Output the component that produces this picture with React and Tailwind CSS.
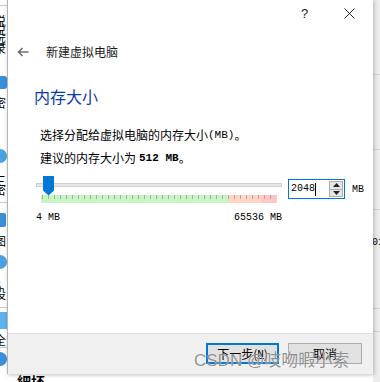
import React from "react";

function Ticks() {
  const ticks = Array.from({ length: 39 });
  return (
    <div className="absolute left-0 top-0 flex gap-[5px] pl-[1px]">
      {ticks.map((_, i) => (
        <div key={i} className="w-px h-[4px] bg-[#a8a8a8]" />
      ))}
    </div>
  );
}

function LeftStrip() {
  return (
    <div className="w-[7px] h-full bg-white flex flex-col overflow-hidden font-['Noto_Sans_CJK_SC',sans-serif] text-[12px] leading-[8px] text-black">
      <div className="h-[6px] border-b border-[#c8c8c8]" />
      <div className="mt-[11px] flex flex-col gap-[0px]">
        <span className="ml-[-6px]">说</span>
        <span className="ml-[-6px] mt-[1px]">说</span>
        <span className="ml-[-6px] mt-[1px]">远</span>
        <span className="ml-[-6px] mt-[1px]">录</span>
      </div>
      <div className="mt-[24px] ml-[-6px] w-[13px] h-[13px] rounded-[3px] bg-[#3a8fd8]" />
      <span className="mt-[10px] ml-[-6px]">密</span>
      <div className="mt-[42px] ml-[-7px] w-[14px] h-[14px] rounded-full bg-[#4aa3e0]" />
      <span className="mt-[14px] ml-[-6px]">三</span>
      <span className="mt-[1px] ml-[-6px]">密</span>
      <div className="mt-[8px] h-px bg-[#c8c8c8]" />
      <div className="mt-[10px] ml-[-6px] w-[12px] h-[14px] rounded-[2px] bg-[#3a8fd8]" />
      <span className="mt-[10px] ml-[-6px]">图</span>
      <div className="mt-[10px] ml-[-7px] w-[14px] h-[14px] rounded-full bg-[#4aa3e0]" />
      <span className="mt-[12px] ml-[-6px]">S</span>
      <span className="mt-[1px] ml-[-6px]">设</span>
      <div className="mt-[9px] h-px bg-[#c8c8c8]" />
      <div className="mt-[4px] h-[17px] bg-[#5cb3ee]" />
      <span className="mt-[7px] ml-[-6px]">全</span>
      <div className="mt-[3px] h-px bg-[#c8c8c8]" />
      <div className="mt-[4px] ml-[-7px] w-[14px] h-[14px] rounded-full bg-[#3a8fd8]" />
    </div>
  );
}

function RightStrip() {
  return (
    <div className="w-[7px] h-full bg-[#ececec] flex flex-col overflow-hidden">
      <div className="h-[75px] border-b border-[#d4d4d4]" />
      <div className="h-[75px] border-b border-[#d4d4d4]" />
      <div className="h-[60px] border-b border-[#d4d4d4]" />
      <div className="h-[27px]" />
      <div className="ml-[-1px] font-['Liberation_Mono',monospace] text-[10px] leading-[12px] text-black">01</div>
      <div className="h-[60px] border-b border-[#d4d4d4]" />
      <div className="h-[23px] border-b border-[#d4d4d4]" />
    </div>
  );
}

export default function App() {
  const cjk = "font-['Microsoft_YaHei','Noto_Sans_CJK_SC',sans-serif]";
  return (
    <div className="relative w-[380px] h-[382px] overflow-hidden bg-white">
      <div className="flex w-full h-full">
        <LeftStrip />
        <div className="flex-1 flex flex-col">
          <div className="flex-1" />
          <div className="h-[8px] pl-[10px] overflow-hidden">
            <span className="block mt-[0px] font-['Noto_Sans_CJK_SC',sans-serif] text-[14px] font-bold leading-[14px] text-black">細坯</span>
          </div>
        </div>
        <RightStrip />
      </div>

      <div className="absolute left-[7px] top-0 w-[366px] h-[374px] bg-white border-l border-[#b4b4b4] flex flex-col shadow-[1px_1px_4px_rgba(0,0,0,0.25)] font-['Noto_Sans_CJK_SC',sans-serif] text-black">
        {/* title bar */}
        <div className="h-[30px] flex justify-end pr-[1px]">
          <div className="w-[45px] h-full flex items-center justify-center font-['Liberation_Sans',sans-serif] text-[13px] text-[#222] pb-[3px]">?</div>
          <div className="w-[45px] h-full flex items-center justify-center pb-[3px]">
            <svg width="11" height="11" viewBox="0 0 11 11">
              <path d="M0.5 0.5 L10.5 10.5 M10.5 0.5 L0.5 10.5" stroke="#222" strokeWidth="1" fill="none" />
            </svg>
          </div>
        </div>

        {/* header */}
        <div className="mt-[10px] h-[24px] flex items-center">
          <svg className="ml-[9px]" width="12" height="10" viewBox="0 0 12 10">
            <path d="M11.5 5 H1.5 M5.5 1 L1.5 5 L5.5 9" stroke="#6d6d6d" strokeWidth="1.6" fill="none" />
          </svg>
          <span className={`ml-[17px] text-[12px] leading-[16px] text-[#1a1a1a] ${cjk}`}>新建虚拟电脑</span>
        </div>

        {/* heading */}
        <div className={`mt-[21px] ml-[26px] h-[22px] text-[16px] leading-[22px] text-[#0a3aa8] ${cjk}`}>内存大小</div>

        {/* paragraphs */}
        <div className="mt-[18px] ml-[32px] h-[20px] flex items-center text-[12px] leading-[20px]">
          <span>选择分配给虚拟电脑的内存大小</span>
          <span className="font-['Liberation_Mono',monospace] text-[11px]">(MB)</span>
          <span>。</span>
        </div>
        <div className="mt-[3px] ml-[32px] h-[20px] flex items-center text-[12px] leading-[20px]">
          <span>建议的内存大小为 </span>
          <span className="ml-[3px] font-['Liberation_Mono',monospace] font-bold text-[11px]">512 MB</span>
          <span>。</span>
        </div>

        {/* slider row */}
        <div className="mt-[8px] ml-[28px] h-[27px] flex items-start">
          <div className="relative w-[246px] h-[27px]">
            <div className="absolute left-0 top-[7px] w-[246px] h-[4px] bg-[#e6e6e6] border border-[#d0d0d0]" />
            <div className="absolute left-[5px] top-[19px] w-[236px] h-[8px] flex">
              <div className="w-[187px] h-full bg-[#c6f7c2]" />
              <div className="w-[33px] h-full bg-[#ffd6c4]" />
              <div className="w-[16px] h-full bg-[#ffc6c6]" />
              <Ticks />
            </div>
            <svg className="absolute left-[7px] top-0" width="11" height="20" viewBox="0 0 11 20">
              <path d="M0 0 H11 V14.5 L5.5 19.5 L0 14.5 Z" fill="#0078d7" />
            </svg>
          </div>
          <div className="ml-[6px] mt-[3px] w-[57px] h-[20px] border border-[#0078d7] bg-white flex items-center pl-[2px] pr-[1px]">
            <span className="font-['Liberation_Mono',monospace] text-[10px] leading-[12px]">2048</span>
            <div className="w-px h-[13px] bg-black" />
            <div className="ml-auto w-[14px] h-[16px] border border-[#adadad] bg-[#e6e6e6] flex flex-col">
              <div className="flex-1 flex items-center justify-center border-b border-[#adadad]">
                <svg width="7" height="4" viewBox="0 0 7 4"><path d="M3.5 0 L7 4 H0 Z" fill="#222" /></svg>
              </div>
              <div className="flex-1 flex items-center justify-center">
                <svg width="7" height="4" viewBox="0 0 7 4"><path d="M0 0 H7 L3.5 4 Z" fill="#222" /></svg>
              </div>
            </div>
          </div>
          <span className="ml-[7px] mt-[8px] font-['Liberation_Mono',monospace] text-[10px] leading-[12px]">MB</span>
        </div>

        {/* labels */}
        <div className="mt-[9px] ml-[28px] w-[246px] h-[12px] flex justify-between font-['Liberation_Mono',monospace] text-[10px] leading-[12px]">
          <span>4 MB</span>
          <span>65536 MB</span>
        </div>

        <div className="flex-1" />

        {/* footer */}
        <div className="h-[41px] bg-[#f0f0f0] border-t border-[#dfdfdf] flex items-start justify-end pr-[11px] pt-[9px] gap-[9px] relative">
          <button className="w-[73px] h-[21px] border-2 border-[#0078d7] bg-[#e1e1e1] text-[12px] leading-[16px] flex items-center justify-center">
            下一步(<span className="underline font-['Liberation_Mono',monospace] text-[11px]">N</span>)
          </button>
          <button className="w-[74px] h-[21px] border border-[#adadad] bg-[#e1e1e1] text-[12px] leading-[16px] flex items-center justify-center">
            取消
          </button>
          <div className="absolute left-[186px] top-[17px] whitespace-nowrap font-['Liberation_Sans','Noto_Sans_CJK_SC',sans-serif] text-[17px] leading-[20px] text-[rgba(110,110,110,0.75)] [text-shadow:0_0_1px_rgba(255,255,255,0.9)]">
            CSDN @吱吻暇小索
          </div>
        </div>
      </div>
    </div>
  );
}
